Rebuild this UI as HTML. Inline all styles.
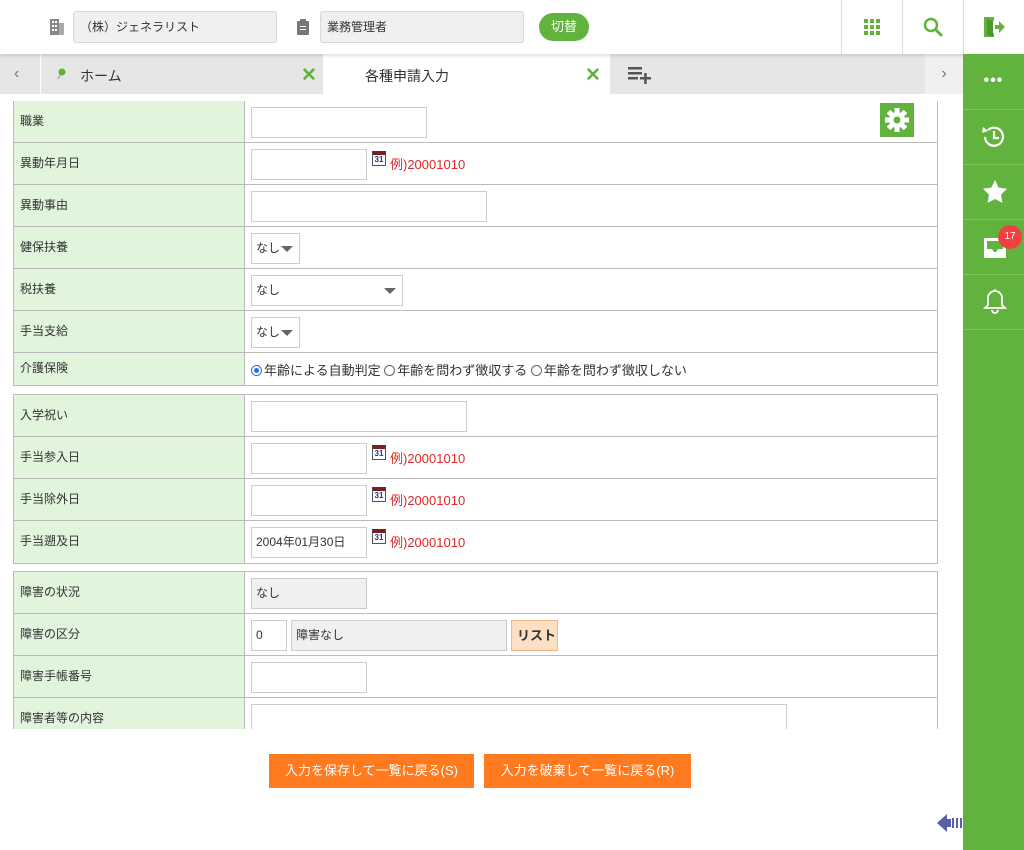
<!DOCTYPE html>
<html><head><meta charset="utf-8"><style>
*{margin:0;padding:0;box-sizing:border-box}
body{width:1024px;height:850px;overflow:hidden;background:#fff;font-family:"Liberation Sans","Noto Sans CJK JP",sans-serif;font-size:12px;color:#333;position:relative}
.a{position:absolute}
.hdr{left:0;top:0;width:1024px;height:54px;background:#fff;box-shadow:0 2px 3px rgba(0,0,0,.12);z-index:5}
.box{background:#f0f0f0;border:1px solid #d8d8d8;border-radius:3px;height:32px;top:11px;font-size:12px;line-height:30px;padding-left:6px}
.vd{top:0;width:1px;height:54px;background:#ddd}
.tabs{left:0;top:54px;width:963px;height:40px;background:#e6e6e6}
.side{left:963px;top:54px;width:61px;height:796px;background:#62b23e;z-index:6}
.sep{left:0;width:61px;height:1px;background:#7fc25f}
.clip{left:0;top:94px;width:963px;height:635px;overflow:hidden}
.tb{position:absolute;left:13px;width:925px;border:1px solid #bbb;border-top:none}
.tb.t{border-top:1px solid #bbb}
.r{position:relative;height:42px;border-bottom:1px solid #bbb}
.r:last-child{border-bottom:none}
.l{position:absolute;left:0;top:0;width:231px;height:100%;background:#e1f4dc;border-right:1px solid #bbb;padding-left:6px;line-height:40px}
.in{position:absolute;top:6px;height:31px;border:1px solid #ccc;background:#fff;line-height:29px;padding-left:4px}
.g{background:#f0f0f0}
.sel::after{content:"";position:absolute;right:6px;top:12px;border-left:6px solid transparent;border-right:6px solid transparent;border-top:6px solid #666}
.cal{position:absolute;top:8px;width:14px;height:15px;background:#fff;border:1px solid #555;border-top:4px solid #7a1f1f;font-size:8px;color:#23329a;text-align:center;line-height:9px;font-weight:bold}
.ex{position:absolute;top:11px;color:#e02828;font-size:13px}
.btn{top:754px;height:34px;background:#ff7a1e;color:#fff;font-size:13px;line-height:34px;text-align:center}
.rad{display:inline-block;width:11px;height:11px;border:1px solid #666;border-radius:50%;vertical-align:-1px;margin-right:2px;position:relative}
</style></head><body>
<div class="a hdr">
 <svg class="a" style="left:50px;top:19px" width="14" height="16"><rect x="0" y="0" width="9" height="16" fill="#888"/><rect x="9" y="4" width="5" height="12" fill="#aaa"/><g fill="#fff"><rect x="2" y="2" width="2" height="2"/><rect x="5" y="2" width="2" height="2"/><rect x="2" y="6" width="2" height="2"/><rect x="5" y="6" width="2" height="2"/><rect x="2" y="10" width="2" height="2"/><rect x="5" y="10" width="2" height="2"/></g></svg>
 <div class="a box" style="left:73px;width:204px">（株）ジェネラリスト</div>
 <svg class="a" style="left:297px;top:19px" width="12" height="16"><rect x="0" y="2" width="12" height="14" rx="1" fill="#777"/><rect x="3" y="0" width="6" height="4" fill="#777"/><g fill="#fff"><rect x="3" y="7" width="6" height="1"/><rect x="3" y="10" width="6" height="1"/></g></svg>
 <div class="a box" style="left:320px;width:204px">業務管理者</div>
 <div class="a" style="left:539px;top:13px;width:50px;height:28px;border-radius:14px;background:#62b23e;color:#fff;text-align:center;line-height:28px;font-size:13px">切替</div>
 <div class="a vd" style="left:841px"></div><div class="a vd" style="left:902px"></div><div class="a vd" style="left:963px"></div>
 <svg class="a" style="left:864px;top:19px" width="16" height="16" fill="#62b23e"><rect x="0" y="0" width="4" height="4"/><rect x="6" y="0" width="4" height="4"/><rect x="12" y="0" width="4" height="4"/><rect x="0" y="6" width="4" height="4"/><rect x="6" y="6" width="4" height="4"/><rect x="12" y="6" width="4" height="4"/><rect x="0" y="12" width="4" height="4"/><rect x="6" y="12" width="4" height="4"/><rect x="12" y="12" width="4" height="4"/></svg>
 <svg class="a" style="left:923px;top:17px" width="20" height="20"><circle cx="8" cy="8" r="6" fill="none" stroke="#62b23e" stroke-width="2.5"/><line x1="12.5" y1="12.5" x2="18" y2="18" stroke="#62b23e" stroke-width="3" stroke-linecap="round"/></svg>
 <svg class="a" style="left:983px;top:16px" width="22" height="22"><path d="M1 1h10v4h-3v12h3v4H1z" fill="#62b23e"/><path d="M4 3l6 2v16l-6-2z" fill="#4a9a2a"/><path d="M12 9h4V5l6 6-6 6v-4h-4z" fill="#62b23e"/></svg>
</div>
<div class="a tabs">
 <div class="a" style="left:14px;top:0;line-height:40px;color:#777;font-size:16px">‹</div>
 <div class="a" style="left:40px;top:0;width:1px;height:40px;background:#fff"></div>
 <svg class="a" style="left:56px;top:13px" width="12" height="14"><line x1="2" y1="12" x2="5" y2="6" stroke="#aaa" stroke-width="1.5"/><circle cx="6" cy="5" r="3.5" fill="#5cb82a"/></svg>
 <div class="a" style="left:80px;top:12px;font-size:14px;color:#333">ホーム</div>
 <div class="a" style="left:301px;top:10px;font-size:19px;font-weight:bold;color:#62b23e">✕</div>
 <div class="a" style="left:323px;top:0;width:287px;height:40px;background:#fff"></div>
 <div class="a" style="left:365px;top:12px;font-size:14px;color:#333">各種申請入力</div>
 <div class="a" style="left:585px;top:10px;font-size:19px;font-weight:bold;color:#62b23e">✕</div>
 <svg class="a" style="left:628px;top:12px" width="24" height="18" fill="#555"><rect x="0" y="1" width="14" height="2.5"/><rect x="0" y="6" width="14" height="2.5"/><rect x="0" y="11" width="10" height="2.5"/><rect x="12" y="11" width="11" height="2.5"/><rect x="16.2" y="7" width="2.5" height="11"/></svg>
 <div class="a" style="left:925px;top:0;width:38px;height:40px;background:#f0f0f0;color:#777;font-size:16px;text-align:center;line-height:40px">›</div>
</div>
<div class="a side">
 <div class="a" style="left:0;top:18px;width:61px;text-align:center;color:#fff;font-size:16px;font-weight:bold;letter-spacing:1px">•••</div>
 <div class="a sep" style="top:55px"></div>
 <svg class="a" style="left:17px;top:69px" width="28" height="28"><path d="M5 14a9 9 0 1 0 3-7" fill="none" stroke="#fff" stroke-width="2.2"/><path d="M3 4l5 4-6 2z" fill="#fff"/><path d="M14 8v7h5" fill="none" stroke="#fff" stroke-width="2.2"/></svg>
 <div class="a sep" style="top:110px"></div>
 <svg class="a" style="left:19px;top:125px" width="26" height="25"><path d="M13 1l3.7 7.6 8.3 1.2-6 5.8 1.4 8.3L13 20l-7.4 3.9L7 15.6 1 9.8l8.3-1.2z" fill="#fff"/></svg>
 <div class="a sep" style="top:165px"></div>
 <svg class="a" style="left:19px;top:180px" width="26" height="26"><path d="M2 4h22v20H2z M5 7v8h5l2 3h2l2-3h5V7z" fill="#fff" fill-rule="evenodd"/></svg>
 <div class="a" style="left:35px;top:171px;width:24px;height:24px;border-radius:50%;background:#f04040;color:#fff;font-size:10px;text-align:center;line-height:24px">17</div>
 <div class="a sep" style="top:220px"></div>
 <svg class="a" style="left:20px;top:234px" width="24" height="28"><path d="M12 3a7 7 0 0 0-7 7v7l-3 3h20l-3-3v-7a7 7 0 0 0-7-7z" fill="none" stroke="#fff" stroke-width="1.8"/><path d="M9 22a3 3 0 0 0 6 0" fill="none" stroke="#fff" stroke-width="1.8"/><circle cx="12" cy="2.5" r="1.3" fill="#fff"/></svg>
 <div class="a sep" style="top:275px"></div>
</div>
<div class="a clip">
 <div class="tb" style="top:7px">
  <div class="r"><div class="l">職業</div><div class="in" style="left:237px;width:176px"></div>
   <div class="a" style="left:866px;top:2px;width:34px;height:34px;background:#62b23e"><svg width="34" height="34"><g transform="translate(17 17)" fill="#fff"><circle r="8"/><rect x="-2.5" y="-12" width="5" height="24"/><rect x="-2.5" y="-12" width="5" height="24" transform="rotate(45)"/><rect x="-2.5" y="-12" width="5" height="24" transform="rotate(90)"/><rect x="-2.5" y="-12" width="5" height="24" transform="rotate(135)"/><circle r="3.5" fill="#62b23e"/></g></svg></div></div>
  <div class="r"><div class="l">異動年月日</div><div class="in" style="left:237px;width:116px"></div><div class="cal" style="left:358px">31</div><div class="ex" style="left:376px">例)20001010</div></div>
  <div class="r"><div class="l">異動事由</div><div class="in" style="left:237px;width:236px"></div></div>
  <div class="r"><div class="l">健保扶養</div><div class="in sel" style="left:237px;width:49px">なし</div></div>
  <div class="r"><div class="l">税扶養</div><div class="in sel" style="left:237px;width:152px">なし</div></div>
  <div class="r"><div class="l">手当支給</div><div class="in sel" style="left:237px;width:49px">なし</div></div>
  <div class="r" style="height:32px"><div class="l" style="line-height:30px">介護保険</div><div class="a" style="left:237px;top:7px;font-size:13px"><span class="rad" style="border-color:#1a73e8"><span class="a" style="left:2px;top:2px;width:5px;height:5px;border-radius:50%;background:#1a73e8"></span></span>年齢による自動判定 <span class="rad"></span>年齢を問わず徴収する <span class="rad"></span>年齢を問わず徴収しない</div></div>
 </div>
 <div class="tb t" style="top:300px">
  <div class="r"><div class="l">入学祝い</div><div class="in" style="left:237px;width:216px"></div></div>
  <div class="r"><div class="l">手当参入日</div><div class="in" style="left:237px;width:116px"></div><div class="cal" style="left:358px">31</div><div class="ex" style="left:376px">例)20001010</div></div>
  <div class="r"><div class="l">手当除外日</div><div class="in" style="left:237px;width:116px"></div><div class="cal" style="left:358px">31</div><div class="ex" style="left:376px">例)20001010</div></div>
  <div class="r"><div class="l">手当遡及日</div><div class="in" style="left:237px;width:116px">2004年01月30日</div><div class="cal" style="left:358px">31</div><div class="ex" style="left:376px">例)20001010</div></div>
 </div>
 <div class="tb t" style="top:477px">
  <div class="r"><div class="l">障害の状況</div><div class="in g" style="left:237px;width:116px">なし</div></div>
  <div class="r"><div class="l">障害の区分</div><div class="in" style="left:237px;width:36px">0</div><div class="in g" style="left:277px;width:216px">障害なし</div><div class="in" style="left:497px;width:47px;background:#fde0c4;border-color:#f0b888;font-weight:bold;font-size:13px;padding-left:5px">リスト</div></div>
  <div class="r"><div class="l">障害手帳番号</div><div class="in" style="left:237px;width:116px"></div></div>
  <div class="r"><div class="l">障害者等の内容</div><div class="in" style="left:237px;width:536px;height:40px"></div></div>
 </div>
</div>
<div class="a btn" style="left:269px;width:205px">入力を保存して一覧に戻る(S)</div>
<div class="a btn" style="left:484px;width:207px">入力を破棄して一覧に戻る(R)</div>
<svg class="a" style="left:937px;top:812px" width="26" height="22"><path d="M0 11l10-9v5h4v8h-4v5z" fill="#5a5ea8"/><rect x="15" y="6" width="2" height="10" fill="#5a5ea8"/><rect x="19" y="6" width="2" height="10" fill="#5a5ea8"/><rect x="23" y="6" width="2" height="10" fill="#5a5ea8"/></svg>
</body></html>
